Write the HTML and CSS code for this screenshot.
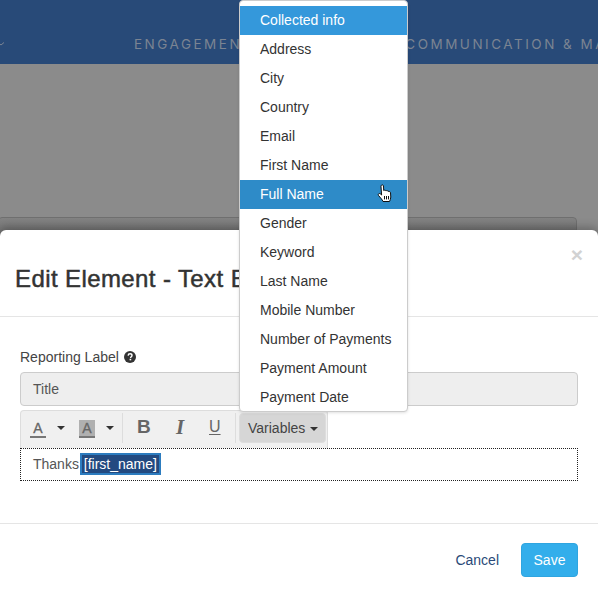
FILE: index.html
```html
<!DOCTYPE html>
<html lang="en">
<head>
<meta charset="utf-8">
<title>Edit Element</title>
<link rel="stylesheet" href="styles.css">
</head>
<body>
<div class="page">
  <header class="topbar">
    <svg class="chev" width="6" height="4" viewBox="0 0 6 4"><path d="M0 .5 L3 3 L6 .5" fill="none" stroke="#7b8492" stroke-width="1"/></svg>
    <nav class="nav">
      <span class="nav-a">ENGAGEMENT</span>
      <span class="nav-b">COMMUNICATION &amp; MA</span>
    </nav>
  </header>
  <main class="backdrop">
    <div class="bg-card"></div>
  </main>

  <section class="modal">
    <div class="modal-head">
      <h1 class="modal-title">Edit Element - Text Block</h1>
      <span class="close">×</span>
    </div>
    <div class="modal-body">
      <label class="label">Reporting Label
        <svg class="help" width="12" height="12" viewBox="0 0 12 12"><circle cx="6" cy="6" r="6" fill="#333"/><path d="M4.1 4.6 C4.2 3.4 5 2.8 6.1 2.8 C7.2 2.8 8 3.5 8 4.4 C8 5.7 6.6 5.7 6.6 6.9" fill="none" stroke="#fff" stroke-width="1.4"/><rect x="5.6" y="7.8" width="1.6" height="1.5" fill="#fff"/></svg>
      </label>
      <div class="input">Title</div>
      <div class="toolbar">
        <div class="tool-group first">
          <span class="tool-a"><span class="a-line">A</span></span>
          <span class="caret"></span>
          <span class="tool-a hl"><span class="a-line">A</span></span>
          <span class="caret"></span>
        </div>
        <div class="tool-group second">
          <span class="tool-b">B</span>
          <span class="tool-i">I</span>
          <span class="tool-u">U</span>
        </div>
        <div class="tool-group third">
          <span class="var-btn">Variables<span class="caret dark"></span></span>
        </div>
      </div>
      <div class="editor">Thanks <span class="sel">[first_name]</span></div>
    </div>
    <div class="modal-foot">
      <a class="cancel">Cancel</a>
      <button class="save">Save</button>
    </div>
  </section>

  <ul class="menu">
    <li class="item head">Collected info</li>
    <li class="item">Address</li>
    <li class="item">City</li>
    <li class="item">Country</li>
    <li class="item">Email</li>
    <li class="item">First Name</li>
    <li class="item hover">Full Name
      <svg class="hand" width="16" height="20" viewBox="0 0 16 20"><path d="M4.5 1.2 C5.4 .6 6.4 1 6.5 2 L6.7 6.5 C7.5 5.9 8.6 6.1 8.9 6.8 C9.8 6.3 10.9 6.6 11.1 7.4 C12.1 7.1 13.4 7.6 13.5 8.8 L13.8 13 C13.8 15 13 16.2 12.5 17.5 L6 17.5 C5.3 15.6 3.4 13.7 1.6 11.6 C.8 10.6 1.5 9.3 2.6 9.5 C3.2 9.6 3.9 10.3 4.6 11 L4 2.6 C4 2 4.1 1.5 4.5 1.2 Z" fill="#fff" stroke="#111" stroke-width="1"/><path d="M7.5 12v3.4M9.5 12v3.4M11.5 12v3.4" stroke="#111" stroke-width="1"/></svg>
    </li>
    <li class="item">Gender</li>
    <li class="item">Keyword</li>
    <li class="item">Last Name</li>
    <li class="item">Mobile Number</li>
    <li class="item">Number of Payments</li>
    <li class="item">Payment Amount</li>
    <li class="item">Payment Date</li>
  </ul>
</div>
</body>
</html>
```
FILE: styles.css
```css
* { box-sizing: border-box; }
html, body { margin: 0; padding: 0; height: 100%; }
body { font-family: "Liberation Sans", Arial, sans-serif; font-size: 14px; color: #333; background: #8b8b8b; overflow: hidden; }
.page { position: relative; width: 598px; height: 597px; overflow: hidden; }

.topbar { height: 64px; background: #284a78; position: relative; }
.chev { position: absolute; left: -2px; top: 42px; }
.nav { display: flex; padding: 36px 0 0 134px; font-family: Inter, "Open Sans", sans-serif; font-size: 13.5px; line-height: 16px; letter-spacing: 2.5px; color: #7b8492; white-space: nowrap; }
.nav-b { margin-left: 152px; }

.backdrop { height: 533px; background: #8b8b8b; padding-top: 153px; }
.bg-card { width: 579px; height: 30px; margin-left: -2px; border: 1px solid #6f6f6f; border-radius: 4px; background: linear-gradient(#838383, #6c6c6c 80%); }

.modal { position: absolute; left: 0; right: 0; top: 230px; height: 367px; background: #fff; border-radius: 6px 6px 0 0; box-shadow: 0 -3px 8px rgba(0,0,0,.25); }
.modal-head { height: 87px; border-bottom: 1px solid #e5e5e5; padding: 34px 15px 0; position: relative; }
.modal-title { margin: 0; font-size: 24px; line-height: 30px; font-weight: 400; letter-spacing: .4px; color: #333; -webkit-text-stroke: .5px #333; white-space: nowrap; }
.close { position: absolute; right: 15px; top: 14px; font-size: 21px; line-height: 21px; font-weight: 700; color: #d2d2d2; }

.modal-body { height: 206px; padding: 31px 20px 0; }
.label { display: flex; align-items: center; gap: 5px; height: 18px; line-height: 18px; color: #444; }
.help { flex: none; }
.input { height: 34px; margin-top: 6px; padding: 0 12px; background: #eee; border: 1px solid #ccc; border-radius: 4px; line-height: 32px; color: #555; }

.toolbar { display: flex; align-items: flex-start; width: 308px; height: 38px; margin-top: 4px; padding: 2px 1px 0 0; background: #f0f0f0; border: 1px solid #ddd; border-bottom: 0; border-radius: 4px 4px 0 0; }
.tool-group { display: flex; align-items: center; height: 30px; border-right: 1px solid #ddd; }
.tool-group.first { width: 102px; padding-left: 9px; }
.tool-group.second { width: 113px; padding-left: 14px; }
.tool-group.third { border-right: 0; padding-left: 3px; }
.tool-a { display: flex; justify-content: center; width: 16px; height: 18px; margin-top: 1px; font-size: 14px; color: #666; }
.a-line { display: block; width: 16px; height: 18px; text-align: center; line-height: 17px; border-bottom: 2px solid #777; -webkit-text-stroke: .3px #666; }
.tool-a.hl { margin-left: 14px; background: #b0b0b0; }
.caret { display: inline-block; width: 0; height: 0; margin-left: 11px; border-top: 4px solid #333; border-left: 4px solid transparent; border-right: 4px solid transparent; }
.caret.dark { margin-left: 5px; vertical-align: 2px; }
.tool-b, .tool-i, .tool-u { display: block; width: 36px; height: 22px; font-size: 19px; line-height: 22px; color: #666; margin-top: -2px; }
.tool-b { font-weight: 700; }
.tool-i { font-family: "Liberation Serif", serif; font-style: italic; font-weight: 700; font-size: 21px; padding-left: 3px; }
.tool-u { font-size: 16px; width: 22px; text-decoration: underline; text-underline-offset: 2px; }
.var-btn { display: block; width: 87px; height: 30px; padding-left: 8px; line-height: 29px; background: #d6d6d6; border: 1px solid #ddd; border-radius: 4px; color: #444; }

.editor { height: 33px; padding: 5px 13px 0; line-height: 22px; color: #555; outline: 1px dotted #222; outline-offset: -1px; }
.sel { display: inline-block; height: 22px; margin-left: -3px; padding: 0 2px; line-height: 18px; background: #234a80; border: 2px solid #2c7cbf; color: #fff; }

.modal-foot { height: 74px; border-top: 1px solid #e5e5e5; padding: 19px 20px 0 0; display: flex; justify-content: flex-end; align-items: flex-start; gap: 22px; }
.cancel { line-height: 34px; color: #2a4a78; }
.save { width: 57px; height: 34px; padding: 0; font: 14px "Liberation Sans", Arial, sans-serif; color: #fff; background: #33aeeb; border: 1px solid #2fa5e0; border-radius: 4px; }

.menu { position: absolute; left: 239px; top: 0; width: 169px; height: 412px; margin: 0; padding: 5px 0 0; list-style: none; background: #fff; border: 1px solid #ccc; border-radius: 4px; overflow: hidden; box-shadow: 0 1px 3px rgba(0,0,0,.12); }
.item { position: relative; height: 29px; padding-left: 20px; line-height: 29px; color: #333; white-space: nowrap; }
.item.head { background: #3498db; color: #fff; }
.item.hover { background: #2e8bc8; color: #fff; }
.hand { position: absolute; left: 137px; top: 4px; }
```
